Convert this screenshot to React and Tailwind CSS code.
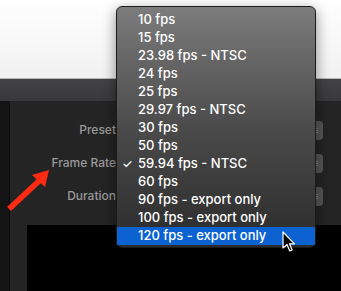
import React from "react";

const rates = [
  "10 fps",
  "15 fps",
  "23.98 fps - NTSC",
  "24 fps",
  "25 fps",
  "29.97 fps - NTSC",
  "30 fps",
  "50 fps",
  "59.94 fps - NTSC",
  "60 fps",
  "90 fps - export only",
  "100 fps - export only",
  "120 fps - export only",
];

function Field({ label }) {
  return (
    <div className="flex items-center h-[20px] gap-[9px]">
      <span className="w-[106px] text-right text-[12px] font-medium text-[#999]">{label}</span>
      <div className="w-[198px] h-[19px] rounded-[4px] bg-[#555] flex items-center justify-end pr-[3px]">
        <span className="text-[6px] leading-[6px] text-[#ccc]">⋮</span>
      </div>
    </div>
  );
}

export default function App() {
  return (
    <div
      className="relative w-[341px] h-[291px] overflow-hidden bg-[#242424]"
      style={{ fontFamily: "Inter, 'Noto Sans', sans-serif" }}
    >
      <div className="h-[78px] bg-gradient-to-b from-white to-[#f1f1f1]" />
      <div className="h-px bg-[#b8b8b8]" />
      <div className="h-[22px] bg-gradient-to-b from-[#434345] to-[#38383a]" />
      <div className="flex h-[190px]">
        <div className="w-[10px] bg-[#141414] border-r border-[#0c0c0c]" />
        <div className="flex-1 flex flex-col bg-[#242424]">
          <div className="flex flex-col gap-[13px] pt-[19px]">
            <Field label="Preset" />
            <Field label="Frame Rate" />
            <Field label="Duration" />
          </div>
          <div className="mt-auto ml-[17px] h-[66px] bg-black" />
        </div>
      </div>

      {/* frame rate menu */}
      <div className="absolute left-[116px] top-[6px] w-[200px] h-[242px] rounded-[6px] border border-[#1b1b1b] bg-gradient-to-b from-[#7c7c7c] via-[#4b4b4b] to-[#2b2b2b] shadow-[0_4px_14px_rgba(0,0,0,0.45)] py-[4px]">
        {rates.map((r) => (
          <div
            key={r}
            className={
              "relative h-[18px] flex items-center pl-[21px] text-[13px] font-medium text-white " +
              (r === "120 fps - export only" ? "bg-[#0b62d0]" : "")
            }
          >
            {r === "59.94 fps - NTSC" && (
              <span className="absolute left-[5px] text-[12px]">✓</span>
            )}
            {r}
          </div>
        ))}
      </div>

      {/* red annotation arrow */}
      <svg className="absolute left-0 top-[160px]" width="60" height="56" viewBox="0 0 60 56">
        <line x1="11" y1="47" x2="39" y2="21" stroke="#ff2a14" strokeWidth="5.5" strokeLinecap="square" />
        <polygon points="49,10 32,15 45,27" fill="#ff2a14" />
      </svg>

      {/* mouse cursor */}
      <svg className="absolute left-[281px] top-[231px]" width="16" height="22" viewBox="0 0 16 22">
        <path d="M2 1 L2 17 L6 13.5 L8.8 20 L11.2 19 L8.5 12.8 L13.5 12.8 Z" fill="black" stroke="white" strokeWidth="1.2" strokeLinejoin="round" />
      </svg>
    </div>
  );
}
